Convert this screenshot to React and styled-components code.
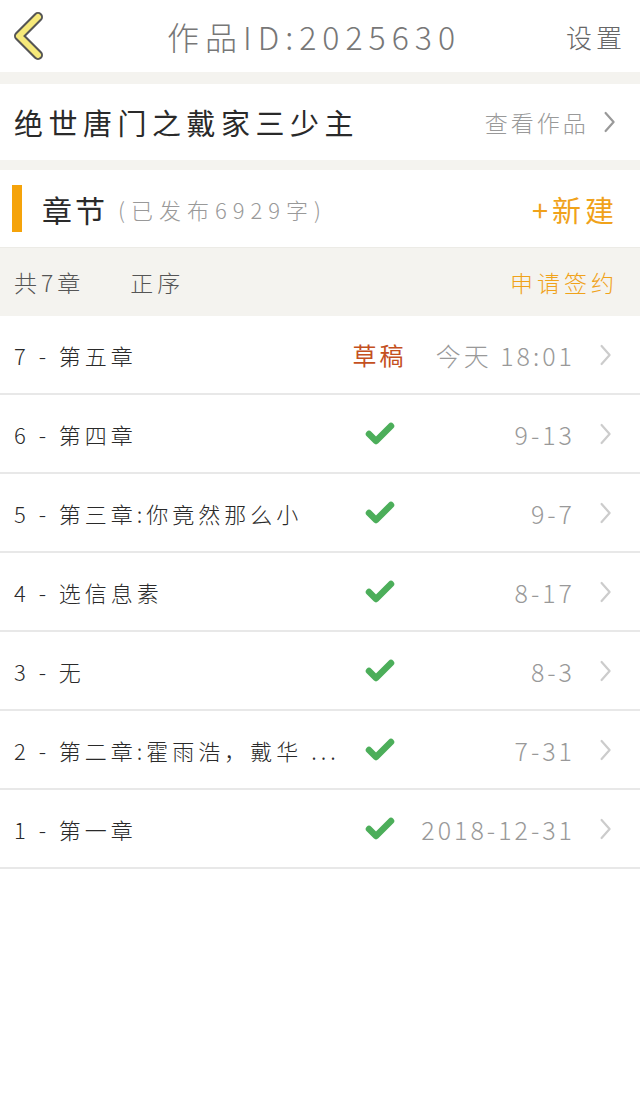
import React from 'react';
import styled, { createGlobalStyle } from 'styled-components';

const GlobalStyle = createGlobalStyle`
    body {
        margin: 0;
        background: #ffffff;
        font-family: "Noto Sans CJK SC", "Noto Sans", sans-serif;
    }
`;

const Page = styled.div`
    width: 640px;
    min-height: 1103px;
    background: #ffffff;
`;

const Header = styled.div`
    height: 72px;
    display: flex;
    align-items: center;
    justify-content: space-between;
    padding: 0 14px 0 10px;
    box-sizing: border-box;
    position: relative;
`;

const Title = styled.div`
    position: absolute;
    left: 0;
    right: 12px;
    text-align: center;
    font-size: 32px;
    letter-spacing: 6px;
    color: #777;
    font-weight: 300;
    pointer-events: none;
`;

const HeaderLink = styled.div`
    font-size: 26px;
    letter-spacing: 4px;
    color: #666;
    font-weight: 300;
`;

const Band = styled.div`
    height: ${p => p.h}px;
    background: #f4f3ef;
`;

const WorkRow = styled.div`
    height: 76px;
    display: flex;
    align-items: center;
    justify-content: space-between;
    padding: 0 24px 0 14px;
`;

const WorkName = styled.div`
    font-size: 29px;
    letter-spacing: 5.5px;
    color: #2a2a2a;
`;

const ViewLink = styled.div`
    display: flex;
    align-items: center;
    gap: 14px;
    font-size: 23px;
    letter-spacing: 3px;
    color: #999;
    font-weight: 300;
`;

const SectionHead = styled.div`
    height: 78px;
    display: flex;
    align-items: center;
    padding: 0 22px 0 12px;
    border-bottom: 1px solid #ecebe6;
    box-sizing: border-box;
`;

const Marker = styled.div`
    width: 10px;
    height: 47px;
    background: #f5a30a;
    margin-right: 20px;
`;

const SectionTitle = styled.span`
    font-size: 30px;
    letter-spacing: 3px;
    color: #2a2a2a;
`;

const SectionNote = styled.span`
    font-size: 22px;
    letter-spacing: 6px;
    color: #999;
    font-weight: 300;
    margin-left: 10px;
    flex: 1;
`;

const NewLink = styled.div`
    font-size: 29px;
    letter-spacing: 4px;
    color: #f0a21a;
`;

const SubHead = styled.div`
    height: 68px;
    background: #f4f3ef;
    display: flex;
    align-items: center;
    padding: 0 22px 0 14px;
    font-size: 23px;
    letter-spacing: 4px;
    color: #555;
    font-weight: 300;
`;

const SubItem = styled.span`
    margin-right: ${p => p.gap || 0}px;
`;

const SignLink = styled.span`
    margin-left: auto;
    color: #f0a21a;
`;

const ChapterRow = styled.div`
    height: 79px;
    box-sizing: border-box;
    border-bottom: 2px solid #e8e8e8;
    display: grid;
    grid-template-columns: 334px 60px 1fr 68px;
    align-items: center;
    padding-left: 14px;
`;

const ChapterName = styled.div`
    grid-column: 1;
    grid-row: 1;
    font-size: 22px;
    letter-spacing: 4px;
    color: #2a2a2a;
    white-space: nowrap;
    overflow: hidden;
    font-weight: 300;
`;

const Status = styled.div`
    grid-column: 2;
    grid-row: 1;
    display: flex;
    justify-content: center;
    font-size: 24px;
    letter-spacing: 3px;
    margin-right: -3px;
    color: #c4501e;
    white-space: nowrap;
`;

const DateText = styled.div`
    grid-column: 2 / 4;
    grid-row: 1;
    justify-self: end;
    font-size: 25px;
    letter-spacing: 3px;
    margin-right: -3px;
    color: #999;
    font-weight: 300;
    white-space: nowrap;
`;

const Arrow = styled.div`
    grid-column: 4;
    grid-row: 1;
    display: flex;
    justify-content: center;
`;

function BackIcon() {
    return (
        <svg width="36" height="48" viewBox="0 0 36 48">
            <path d="M28 5 L9 24 L28 43" fill="none" stroke="#555" strokeWidth="10" strokeLinecap="round" strokeLinejoin="round" />
            <path d="M28 5 L9 24 L28 43" fill="none" stroke="#f6e97a" strokeWidth="6" strokeLinecap="round" strokeLinejoin="round" />
        </svg>
    );
}

function Chevron({ color = '#ccc', size = 22 }) {
    return (
        <svg width={size * 0.6} height={size} viewBox="0 0 12 22">
            <path d="M2 2 L10 11 L2 20" fill="none" stroke={color} strokeWidth="2.2" strokeLinecap="round" strokeLinejoin="round" />
        </svg>
    );
}

function Check() {
    return (
        <svg width="30" height="24" viewBox="0 0 30 24">
            <path d="M4 12 L11 19 L26 4" fill="none" stroke="#4cae5a" strokeWidth="6.5" strokeLinecap="round" strokeLinejoin="round" />
        </svg>
    );
}

const chapters = [
    { name: '7 - 第五章', draft: true, date: '今天 18:01' },
    { name: '6 - 第四章', date: '9-13' },
    { name: '5 - 第三章:你竟然那么小', date: '9-7' },
    { name: '4 - 选信息素', date: '8-17' },
    { name: '3 - 无', date: '8-3' },
    { name: '2 - 第二章:霍雨浩，戴华 ...', date: '7-31' },
    { name: '1 - 第一章', date: '2018-12-31' },
];

function App() {
    return (
        <Page>
            <GlobalStyle />
            <Header>
                <BackIcon />
                <Title>作品ID:2025630</Title>
                <HeaderLink>设置</HeaderLink>
            </Header>
            <Band h={12} />
            <WorkRow>
                <WorkName>绝世唐门之戴家三少主</WorkName>
                <ViewLink>
                    查看作品
                    <Chevron color="#999" size={22} />
                </ViewLink>
            </WorkRow>
            <Band h={10} />
            <SectionHead>
                <Marker />
                <SectionTitle>章节</SectionTitle>
                <SectionNote>(已发布6929字)</SectionNote>
                <NewLink>+新建</NewLink>
            </SectionHead>
            <SubHead>
                <SubItem gap={46}>共7章</SubItem>
                <SubItem>正序</SubItem>
                <SignLink>申请签约</SignLink>
            </SubHead>
            {chapters.map(c => (
                <ChapterRow key={c.name}>
                    <ChapterName>{c.name}</ChapterName>
                    <DateText>{c.date}</DateText>
                    <Status>{c.draft ? '草稿' : <Check />}</Status>
                    <Arrow><Chevron /></Arrow>
                </ChapterRow>
            ))}
        </Page>
    );
}

export default App;
